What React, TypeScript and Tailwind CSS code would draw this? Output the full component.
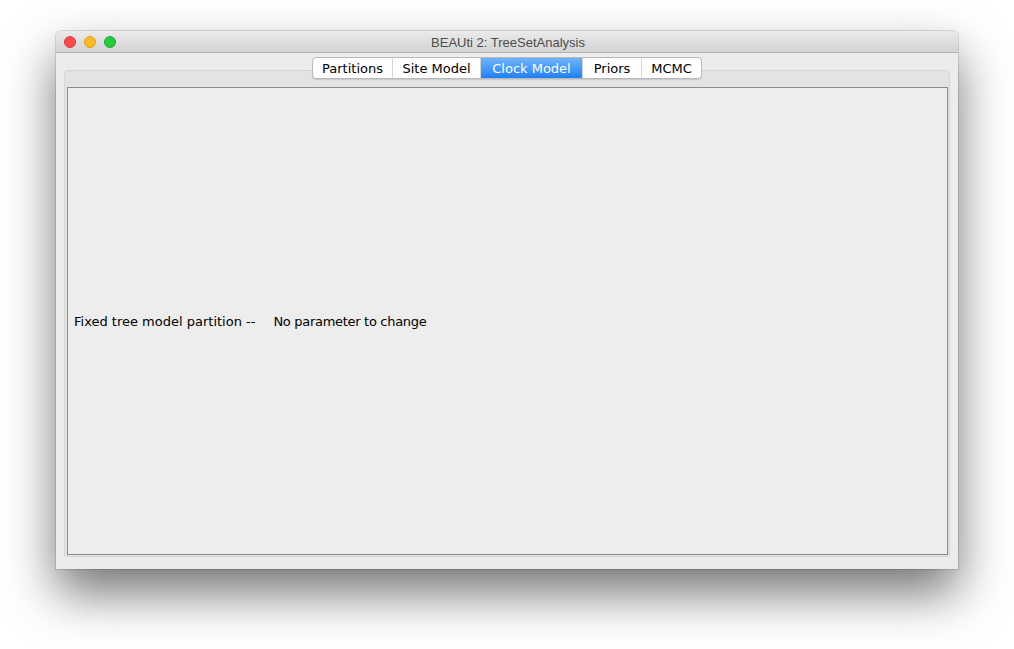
import React from "react";

const tabs = [
  { id: "partitions", label: "Partitions", w: "w-[79px]" },
  { id: "site", label: "Site Model", w: "w-[88px]" },
  { id: "clock", label: "Clock Model", w: "w-[102px]" },
  { id: "priors", label: "Priors", w: "w-[59px]" },
  { id: "mcmc", label: "MCMC", w: "w-[60px]" },
];

const active = "clock";

function TrafficLights() {
  return (
    <div className="flex items-center gap-[8px] pl-[8px] pt-[1px]">
      <span className="h-[12px] w-[12px] rounded-full border border-[#e23a37] bg-[#fd4a4a]" />
      <span className="h-[12px] w-[12px] rounded-full border border-[#e0a010] bg-[#fdb924]" />
      <span className="h-[12px] w-[12px] rounded-full border border-[#1ea832] bg-[#26c940]" />
    </div>
  );
}

function TabStrip() {
  return (
    <div className="relative z-10 flex justify-center">
      <div className="flex h-[22px] overflow-hidden rounded-[4px] border border-[#b9b9b9] bg-white shadow-[0_1px_1px_rgba(0,0,0,0.12)]">
        {tabs.map((t, i) => {
          const on = t.id === active;
          return (
            <div
              key={t.id}
              className={
                "flex items-center justify-center pt-[1px] text-[13px] " +
                t.w +
                (i > 0 ? " border-l border-[#d4d4d4]" : "") +
                (on
                  ? " bg-gradient-to-b from-[#6cb3fa] to-[#1b81fa] text-white"
                  : " text-black")
              }
            >
              {t.label}
            </div>
          );
        })}
      </div>
    </div>
  );
}

export default function App() {
  return (
    <div
      className="h-[649px] w-[1014px] overflow-hidden bg-white pl-[56px] pt-[31px]"
      style={{ fontFamily: '"DejaVu Sans", "Noto Sans", sans-serif' }}
    >
      <div className="flex h-[538px] w-[902px] flex-col rounded-t-[5px] bg-[#ececec] shadow-[0_24px_50px_rgba(0,0,0,0.55),0_0_0_1px_rgba(0,0,0,0.12)]">
        {/* title bar */}
        <div className="relative flex h-[22px] shrink-0 items-center rounded-t-[5px] border-b border-[#b1b1b1] bg-gradient-to-b from-[#ebebeb] to-[#d3d3d3]">
          <TrafficLights />
          <div
            className="absolute inset-x-0 top-0 flex h-[21px] items-center justify-center pl-[2px] pt-[3px] text-[13px] text-[#4d4d4d]"
            style={{ fontFamily: '"Liberation Sans", Arial, sans-serif' }}
          >
            BEAUti 2: TreeSetAnalysis
          </div>
        </div>

        {/* tabbed pane */}
        <div className="flex min-h-0 flex-1 flex-col px-[8px] pb-[12px] pt-[4px]">
          <TabStrip />
          <div className="-mt-[9px] flex min-h-0 flex-1 flex-col rounded-t-[4px] border border-[#d6d6d6] bg-[#e3e3e3] pb-[1px] pl-[2px] pr-[1px] pt-[16px]">
            <div className="flex min-h-0 flex-1 items-center border border-[#8a8a8a] bg-[#ededed] pl-[6px] pt-[1px] text-[13px] text-black">
              <span>Fixed tree model partition --</span>
              <span className="ml-[18px] tracking-[-0.3px]">No parameter to change</span>
            </div>
          </div>
        </div>
      </div>
    </div>
  );
}
